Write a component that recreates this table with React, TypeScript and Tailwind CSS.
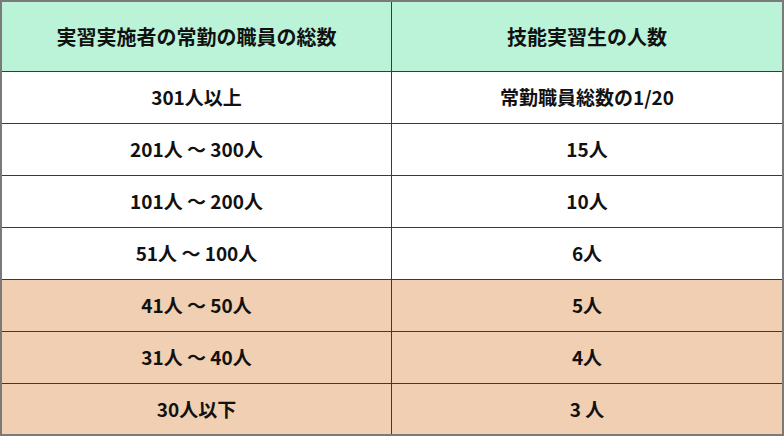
import React from "react";

const rows = [
  { a: "301人以上", b: "常勤職員総数の1/20", peach: false },
  { a: "201人 〜 300人", b: "15人", peach: false },
  { a: "101人 〜 200人", b: "10人", peach: false },
  { a: "51人 〜 100人", b: "6人", peach: false },
  { a: "41人 〜 50人", b: "5人", peach: true },
  { a: "31人 〜 40人", b: "4人", peach: true },
  { a: "30人以下", b: "3 人", peach: true },
];

const App: React.FunctionComponent = () => {
  return (
    <div
      className="w-[784px] h-[436px] bg-white text-[#111] font-bold"
      style={{ fontFamily: '"Noto Sans CJK JP", "Noto Sans", sans-serif' }}
    >
      <div className="flex flex-col w-full h-full border-2 border-[#7a7a7a]">
        <div className="grid grid-cols-[390px_1fr] h-[70px] bg-[#bbf3d9] border-b border-[#3a3a3a]">
          <div className="flex items-center justify-center border-r border-[#3a3a3a] text-[20px]">
            実習実施者の常勤の職員の総数
          </div>
          <div className="flex items-center justify-center text-[20px]">
            技能実習生の人数
          </div>
        </div>
        {rows.map((r, i) => (
          <div
            key={i}
            className={`grid grid-cols-[390px_1fr] ${
              i === rows.length - 1 ? "flex-1" : "h-[52px] border-b border-[#3a3a3a]"
            } ${r.peach ? "bg-[#f0cfb2]" : "bg-white"}`}
          >
            <div className="flex items-center justify-center border-r border-[#3a3a3a] text-[19px]">
              {r.a}
            </div>
            <div className="flex items-center justify-center text-[19px]">{r.b}</div>
          </div>
        ))}
      </div>
    </div>
  );
};

export default App;
